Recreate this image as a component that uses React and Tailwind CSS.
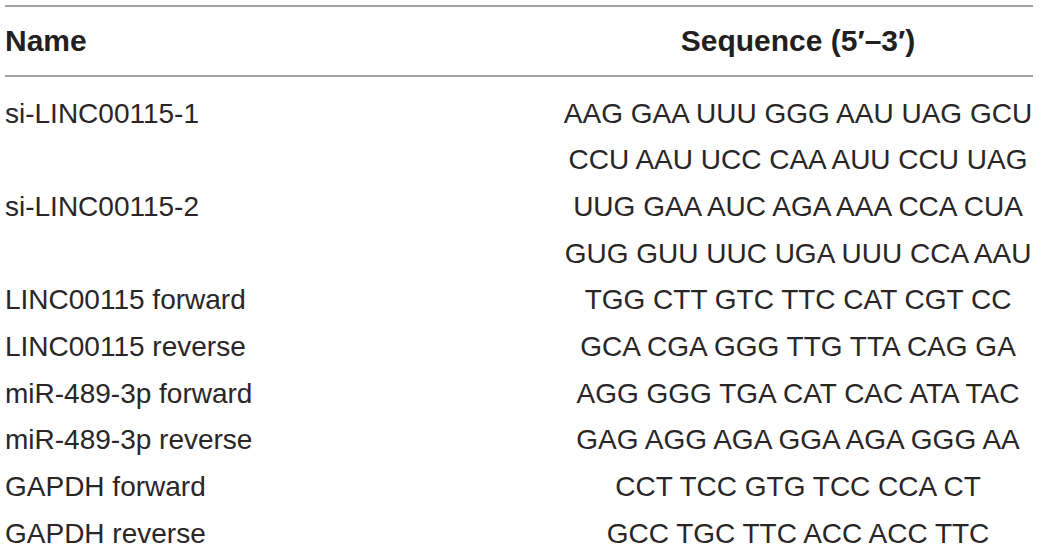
import React from 'react';

const rows = [
  ['si-LINC00115-1', 'AAG GAA UUU GGG AAU UAG GCU'],
  ['', 'CCU AAU UCC CAA AUU CCU UAG'],
  ['si-LINC00115-2', 'UUG GAA AUC AGA AAA CCA CUA'],
  ['', 'GUG GUU UUC UGA UUU CCA AAU'],
  ['LINC00115 forward', 'TGG CTT GTC TTC CAT CGT CC'],
  ['LINC00115 reverse', 'GCA CGA GGG TTG TTA CAG GA'],
  ['miR-489-3p forward', 'AGG GGG TGA CAT CAC ATA TAC'],
  ['miR-489-3p reverse', 'GAG AGG AGA GGA AGA GGG AA'],
  ['GAPDH forward', 'CCT TCC GTG TCC CCA CT'],
  ['GAPDH reverse', 'GCC TGC TTC ACC ACC TTC'],
];

const App = () => {
  return (
    <div className="bg-white w-[1039px] h-[554px] overflow-hidden pt-[5px] pl-[5px] font-['Liberation_Sans',Arial,sans-serif] text-[#231f20]">
      <div className="w-[1028px]">
        {/* header */}
        <div className="grid grid-cols-[1fr_470px] h-[72px] border-y-2 border-[#a3a3a3] items-center font-bold text-[30px]">
          <div className="leading-none">Name</div>
          <div className="leading-none text-center whitespace-nowrap">Sequence (5′–3′)</div>
        </div>

        {/* body */}
        <div className="pt-[13.5px] text-[28px] text-[#2a2627]">
          {rows.map((row, i) => (
            <div key={i} className="grid grid-cols-[1fr_470px] h-[46.67px] items-center">
              <div className="leading-none whitespace-nowrap">{row[0]}</div>
              <div className="leading-none text-center whitespace-nowrap">{row[1]}</div>
            </div>
          ))}
        </div>
      </div>
    </div>
  );
};

export default App;
